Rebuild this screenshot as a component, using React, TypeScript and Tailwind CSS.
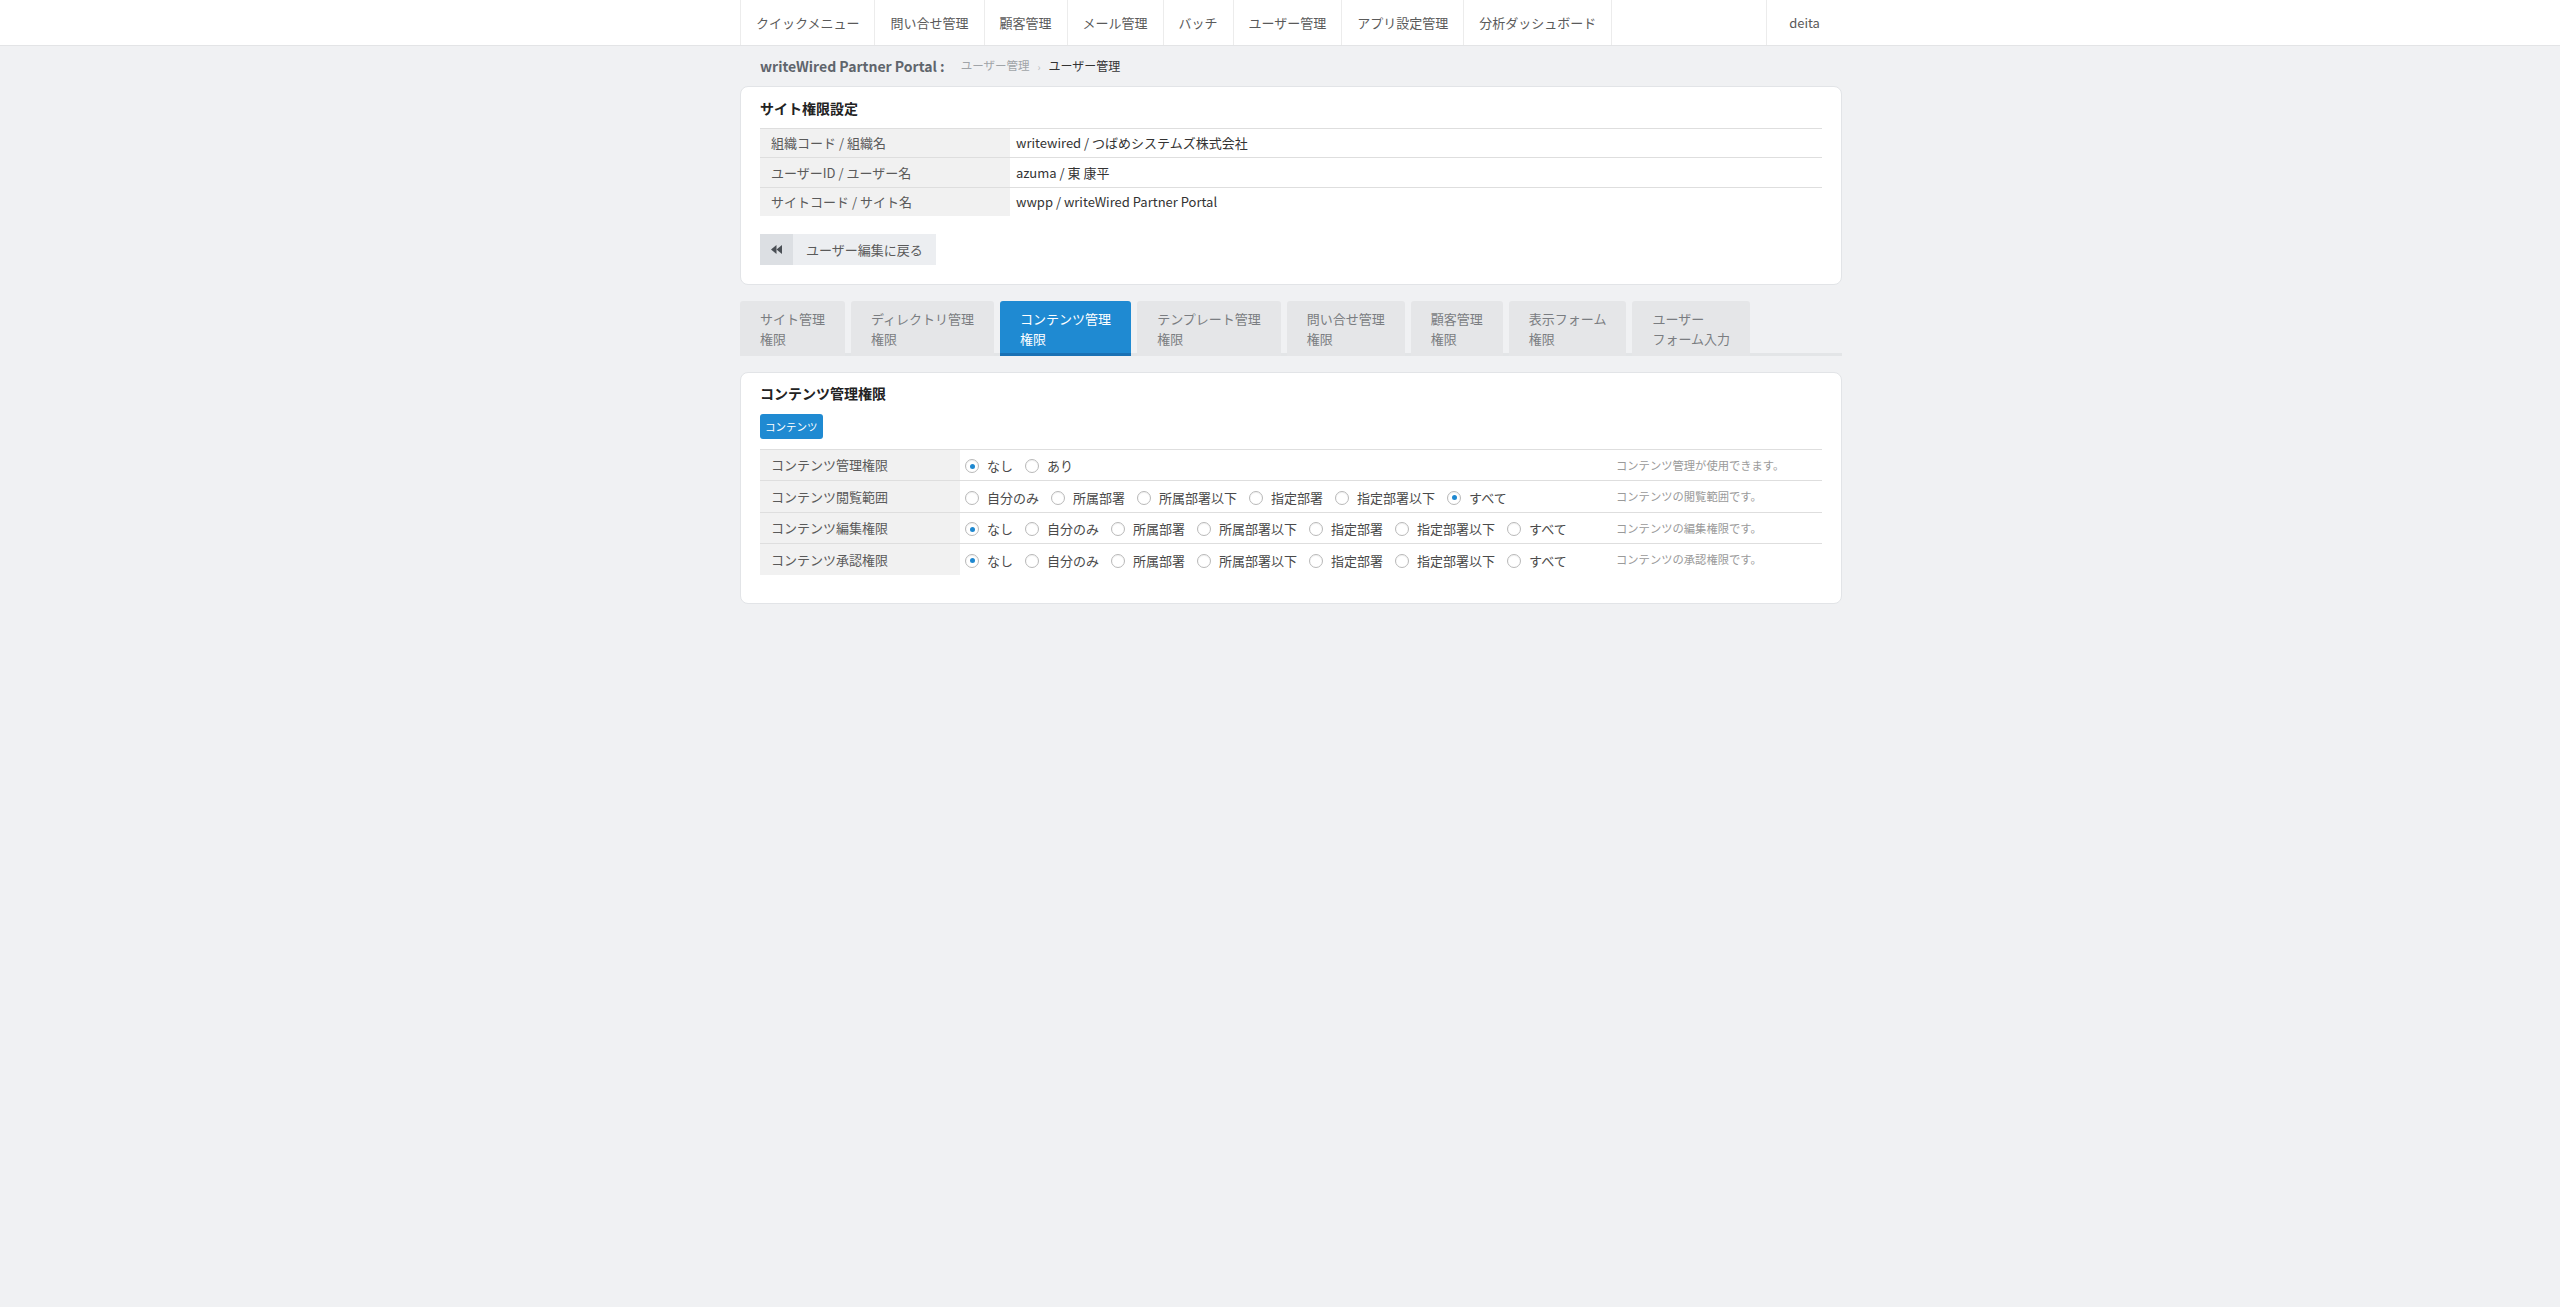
import React from "react";

const FONT = { fontFamily: '"Noto Sans CJK JP", "Noto Sans", sans-serif' };

const navItems = [
  "クイックメニュー",
  "問い合せ管理",
  "顧客管理",
  "メール管理",
  "バッチ",
  "ユーザー管理",
  "アプリ設定管理",
  "分析ダッシュボード",
];

const tabs: [string, string][] = [
  ["サイト管理", "権限"],
  ["ディレクトリ管理", "権限"],
  ["コンテンツ管理", "権限"],
  ["テンプレート管理", "権限"],
  ["問い合せ管理", "権限"],
  ["顧客管理", "権限"],
  ["表示フォーム", "権限"],
  ["ユーザー", "フォーム入力"],
];

const scopeOptions = ["なし", "自分のみ", "所属部署", "所属部署以下", "指定部署", "指定部署以下", "すべて"];

const permissionRows = [
  { label: "コンテンツ管理権限", options: ["なし", "あり"], checked: 0, desc: "コンテンツ管理が使用できます。" },
  { label: "コンテンツ閲覧範囲", options: scopeOptions.slice(1), checked: 5, desc: "コンテンツの閲覧範囲です。" },
  { label: "コンテンツ編集権限", options: scopeOptions, checked: 0, desc: "コンテンツの編集権限です。" },
  { label: "コンテンツ承認権限", options: scopeOptions, checked: 0, desc: "コンテンツの承認権限です。" },
];

const siteInfo = [
  ["組織コード / 組織名", "writewired / つばめシステムズ株式会社"],
  ["ユーザーID / ユーザー名", "azuma / 東 康平"],
  ["サイトコード / サイト名", "wwpp / writeWired Partner Portal"],
];

function Radio({ checked, label }: { checked: boolean; label: string }) {
  return (
    <label className="flex items-center mr-[12px]">
      <span className="w-[14px] h-[14px] rounded-full border border-[#b9b9b9] bg-white flex items-center justify-center shadow-[inset_0_1px_1px_rgba(0,0,0,0.06)]">
        {checked && <span className="w-[5px] h-[5px] rounded-full bg-[#1e88d0]" />}
      </span>
      <span className="ml-[8px] text-[13px] text-[#4a4a4a]">{label}</span>
    </label>
  );
}

export default function App() {
  return (
    <div className="min-h-[1307px] bg-[#f0f1f3]" style={FONT}>
      {/* top navigation */}
      <div className="h-[46px] bg-white border-b border-[#e3e4e6]">
        <div className="w-[1124px] mx-auto pl-[22px] flex h-full">
          <div className="flex h-full border-r border-[#ececec]">
            {navItems.map((n) => (
              <div
                key={n}
                className="h-full px-[15px] flex items-center border-l border-[#ececec] text-[13px] text-[#5a5a5a]"
              >
                {n}
              </div>
            ))}
          </div>
          <div className="flex-1" />
          <div className="w-[76px] h-full flex items-center justify-center border-l border-[#ececec] text-[13px] text-[#5a5a5a]">
            deita
          </div>
        </div>
      </div>

      <div className="w-[1124px] mx-auto pl-[22px]">
        {/* breadcrumb */}
        <div className="h-[40px] flex items-center pl-[20px]">
          <span className="text-[14px] font-bold text-[#5f656c]">writeWired Partner Portal :</span>
          <span className="ml-[16px] text-[11.5px] text-[#a0a4a8]">ユーザー管理</span>
          <span className="mx-[8px] text-[10px] text-[#b8bcc0]">›</span>
          <span className="text-[12px] text-[#333]">ユーザー管理</span>
        </div>

        {/* site permission summary */}
        <div className="bg-white border border-[#e2e4e7] rounded-[8px] px-[19px] pt-[11px] pb-[19px]">
          <div className="text-[14px] leading-[20px] font-bold text-[#222]">サイト権限設定</div>
          <div className="mt-[10px]">
            {siteInfo.map(([k, v]) => (
              <div key={k} className="flex h-[29.3px] border-t border-[#dedede]">
                <div className="w-[250px] bg-[#f1f1f1] pl-[11px] flex items-center text-[13px] text-[#5a5a5a]">{k}</div>
                <div className="flex-1 pl-[6px] flex items-center text-[13px] text-[#333]">{v}</div>
              </div>
            ))}
          </div>
          <button className="mt-[18px] flex h-[31px]">
            <span className="w-[33px] h-full bg-[#dcdfe3] flex items-center justify-center">
              <svg width="11" height="9" viewBox="0 0 11 9">
                <polygon points="5.5,0 5.5,9 0,4.5" fill="#4a4f55" />
                <polygon points="11,0 11,9 5.5,4.5" fill="#4a4f55" />
              </svg>
            </span>
            <span className="h-full bg-[#eceef1] px-[13px] flex items-center text-[13px] text-[#5a5a5a]">
              ユーザー編集に戻る
            </span>
          </button>
        </div>

        {/* permission tabs */}
        <div className="mt-[16px] flex gap-[6px] border-b-[3px] border-[#e3e5e7]">
          {tabs.map(([a, b], i) => {
            const active = i === 2;
            return (
              <div
                key={a + b}
                className={
                  active
                    ? "-mb-[3px] h-[55px] px-[20px] pt-[8px] rounded-t-[3px] bg-[#1f8ad2] border-b-[3px] border-[#1a71b4] text-white text-[13px] leading-[20px]"
                    : "-mb-[3px] h-[55px] px-[20px] pt-[8px] rounded-t-[3px] bg-[#e5e6e8] border-b-[3px] border-transparent text-[#7a7d81] text-[13px] leading-[20px]"
                }
              >
                <div>{a}</div>
                <div>{b}</div>
              </div>
            );
          })}
        </div>

        {/* content permission panel */}
        <div className="mt-[16px] bg-white border border-[#e2e4e7] rounded-[8px] px-[19px] pt-[10px] pb-[28px]">
          <div className="text-[14px] leading-[20px] font-bold text-[#222]">コンテンツ管理権限</div>
          <div className="mt-[11px] inline-flex h-[25px] items-center px-[5px] rounded-[3px] bg-[#1f8ad2] text-white text-[10.5px]">
            コンテンツ
          </div>
          <div className="mt-[10px]">
            {permissionRows.map((r) => (
              <div key={r.label} className="flex h-[31.5px] border-t border-[#dedede]">
                <div className="w-[200px] bg-[#f1f1f1] pl-[11px] flex items-center text-[13px] text-[#5a5a5a]">
                  {r.label}
                </div>
                <div className="flex-1 pl-[5px] flex items-center pt-[2px]">
                  {r.options.map((o, i) => (
                    <Radio key={o} label={o} checked={i === r.checked} />
                  ))}
                </div>
                <div className="w-[212px] pl-[6px] flex items-center text-[11.3px] text-[#9a9a9a]">{r.desc}</div>
              </div>
            ))}
          </div>
        </div>
      </div>
    </div>
  );
}
